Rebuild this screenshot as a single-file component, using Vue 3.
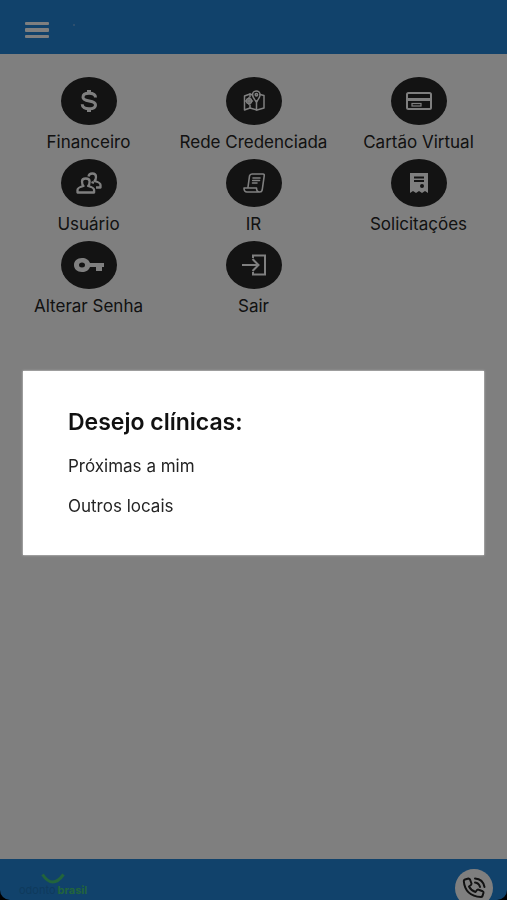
<script setup>
const items = [
  { id: 'money', label: 'Financeiro' },
  { id: 'map', label: 'Rede Credenciada' },
  { id: 'card', label: 'Cartão Virtual' },
  { id: 'users', label: 'Usuário' },
  { id: 'scroll', label: 'IR' },
  { id: 'receipt', label: 'Solicitações' },
  { id: 'key', label: 'Alterar Senha' },
  { id: 'exit', label: 'Sair' },
]
const choices = ['Próximas a mim', 'Outros locais']
</script>

<template>
  <div class="screen">
    <header class="topbar">
      <button class="menu" type="button" aria-label="Menu">
        <svg width="24" height="16" viewBox="0 0 24 16" fill="currentColor">
          <rect y="0" width="24" height="3" rx="1" />
          <rect y="6" width="24" height="4" rx="1" />
          <rect y="13" width="24" height="3" rx="1" />
        </svg>
      </button>
      <span class="dot"></span>
    </header>

    <main class="content">
      <nav class="grid">
        <a v-for="item in items" :key="item.id" class="tile" href="#">
          <span class="disc">
            <svg v-if="item.id === 'money'" width="18" height="26" viewBox="0 0 18 26" fill="none" stroke="currentColor" stroke-width="3">
              <path d="M15.500 9.500C15.500 6.500 12.500 5.300 9 5.300S3 6.700 3 9.200c0 5.300 12.500 2.300 12.500 7.700 0 2.600-2.800 3.900-6.500 3.900s-6.800-1.500-6.800-4.500" />
              <path d="M9 2v4M9 20v4" stroke-width="4" />
            </svg>
            <svg v-else-if="item.id === 'map'" width="22" height="22" viewBox="0 0 22 22" fill="none" stroke="currentColor" stroke-width="1.500" stroke-linejoin="round" stroke-linecap="round">
              <path d="M9.500 5 7 4 1.500 6v14l5.500-2 7 2 7-2V5.500L17 4.500" />
              <path d="M13.500 11v9M7 4v3M7 15v3" />
              <path d="M13.500 12c-2.500-3-4-5-4-7.200a3.800 3.800 0 0 1 7.600 0c0 2.200-1.500 4.200-3.600 7.200z" />
              <circle cx="13.400" cy="4.800" r="1.200" />
              <circle cx="6" cy="11" r="2.500" />
              <path d="M6 7.500v7M2.500 11h7" />
            </svg>
            <svg v-else-if="item.id === 'card'" width="26" height="18" viewBox="0 0 26 18">
              <rect x="1" y="1" width="24" height="16" rx="1.500" fill="none" stroke="currentColor" stroke-width="2" />
              <path d="M2 7.500h22" stroke="currentColor" stroke-width="3" />
              <rect x="6" y="11.500" width="9" height="2.500" fill="none" stroke="currentColor" stroke-width="1.200" />
            </svg>
            <svg v-else-if="item.id === 'users'" width="26" height="22" viewBox="0 0 26 22" fill="none" stroke="currentColor" stroke-width="2.300" stroke-linejoin="round">
              <path d="M1.500 20.500v-2.500q0-2.500 6-4-1.500-1.500-1.500-4.500 0-3 3.800-3t3.800 3q0 3-1.500 4.500 6 1.500 6 4v2.500z" />
              <path d="M12.500 4.500q.5-3 3.800-3 3.700 0 3.700 3.500 0 2.500-1.500 4 6 1.500 6 4v2.500H20" />
              <path d="M15.500 10l2.500 1" />
            </svg>
            <svg v-else-if="item.id === 'scroll'" width="22" height="20" viewBox="0 0 22 20" fill="none" stroke="currentColor" stroke-width="1.600" stroke-linejoin="round" stroke-linecap="round">
              <path d="M5 14 6.500 3Q7 1 9 1h11q1.500 0 1.200 2l-2 14q-.4 2-2.400 2H4q-3 0-3-4h12.500q0 4 3.300 4" />
              <path d="M10 5h7M9.700 7.500h6.800M9.500 10h4.500" />
            </svg>
            <svg v-else-if="item.id === 'receipt'" width="20" height="22" viewBox="0 0 20 22">
              <path d="M1 1h18v20l-3-2-3 2-3-2-3 2-3-2-3 2z" fill="currentColor" />
              <path d="M5 5.500h10M5 9h10" stroke="#262626" stroke-width="1.800" />
              <circle cx="13" cy="14" r="2" fill="#262626" />
            </svg>
            <svg v-else-if="item.id === 'key'" width="32" height="16" viewBox="0 0 32 16">
              <path fill="currentColor" fill-rule="evenodd" d="M9 1c4 0 7 2 8 5h14v4h-2v4h-6v-4h-6c-1 3-4 5-8 5-5 0-8-3-8-7s3-7 8-7zm0 4.500a3 2.500 0 1 0 0 5 3 2.500 0 0 0 0-5z" />
            </svg>
            <svg v-else width="26" height="22" viewBox="0 0 26 22" fill="none" stroke="currentColor" stroke-width="2">
              <path d="M12 4V1.500h12v19H12V18" />
              <path d="M1 11h16M11.500 5 17.500 11l-6 6" />
            </svg>
          </span>
          <span>{{ item.label }}</span>
        </a>
      </nav>
    </main>

    <footer class="bottombar">
      <div class="brand">
        <svg width="24" height="11" viewBox="0 0 24 11" fill="none" stroke="#44c878" stroke-width="3">
          <path d="M1.500 1.500q10 15 21 0" />
        </svg>
        <p class="name"><span>odonto</span><b>brasil</b></p>
      </div>
      <button class="call" type="button" aria-label="Ligar">
        <svg width="24" height="22" viewBox="0 0 24 22" fill="none" stroke="currentColor" stroke-width="2" stroke-linecap="round" stroke-linejoin="round">
          <path d="M3 2.500 6.500 1.500q1 0 1.500 1l1.500 4q0 1-.8 1.700L7 9.500q2 4 6.500 5.500l1.500-2q.8-.6 1.700-.3l4 1.600q1 .5.8 1.500l-1 3.200q-.5 1-1.500 1Q3 19 1.800 4q0-1 1.200-1.500z" />
          <path d="M13 5.500q4 .5 5 4.500M13 1.500q8 .5 9.500 8.500" />
        </svg>
      </button>
    </footer>

    <div class="backdrop">
      <section class="dialog" role="dialog" aria-labelledby="dialog-title">
        <h2 id="dialog-title">Desejo clínicas:</h2>
        <button v-for="choice in choices" :key="choice" class="choice" type="button">{{ choice }}</button>
      </section>
    </div>
  </div>
</template>

<style>
body {
  margin: 0;
  background: #000;
}
</style>

<style scoped>
.screen {
  min-height: 100vh;
  display: flex;
  flex-direction: column;
  background: #fff;
  color: #242424;
  font-family: Inter, "Liberation Sans", sans-serif;
  font-size: 17px;
  line-height: 20px;
}
button {
  border: 0;
  padding: 0;
  background: none;
  font: inherit;
  color: inherit;
}
.topbar {
  height: 54px;
  display: flex;
  align-items: center;
  gap: 24px;
  padding: 6px 25px 0;
  box-sizing: border-box;
  background: #2284d6;
}
.menu {
  display: flex;
  color: #fff;
}
.dot {
  width: 2px;
  height: 2px;
  margin-bottom: 10px;
  background: #5a9fdc;
}
.content {
  flex: 1;
  padding: 23px 6px;
}
.grid {
  display: grid;
  grid-template-columns: repeat(3, 1fr);
  row-gap: 7px;
}
.tile {
  display: flex;
  flex-direction: column;
  align-items: center;
  gap: 7px;
  color: inherit;
  text-decoration: none;
  white-space: nowrap;
}
.disc {
  width: 56px;
  height: 48px;
  display: flex;
  align-items: center;
  justify-content: center;
  border-radius: 50%;
  background: #262626;
  color: #fff;
}
.bottombar {
  height: 41px;
  display: flex;
  align-items: flex-start;
  justify-content: space-between;
  padding: 10px 14px 0 19px;
  box-sizing: border-box;
  overflow: hidden;
  border-radius: 0 0 10px 10px;
  background: #2284d6;
  box-shadow: 0 0 0 10px #000;
  clip-path: inset(0);
}
.brand {
  display: flex;
  flex-direction: column;
  align-items: center;
  padding-top: 4px;
}
.name {
  display: flex;
  gap: 2px;
  margin: 0;
  font-size: 11px;
  line-height: 12px;
  color: #1d74ba;
}
.name b {
  color: #44c878;
}
.call {
  flex: none;
  width: 38px;
  height: 38px;
  display: flex;
  align-items: center;
  justify-content: center;
  border-radius: 50%;
  background: #fff;
}
.backdrop {
  position: fixed;
  inset: 0;
  display: flex;
  align-items: center;
  padding: 25px 23px 0;
  background: rgba(0, 0, 0, 0.5);
}
.dialog {
  flex: 1;
  display: flex;
  flex-direction: column;
  align-items: flex-start;
  gap: 20px;
  padding: 37px 45px 39px;
  background: #fff;
  box-shadow: 0 0 2px #ddd;
}
.dialog h2 {
  margin: 0;
  font-size: 23px;
  line-height: 28px;
  font-weight: 600;
  color: #111;
}
</style>
